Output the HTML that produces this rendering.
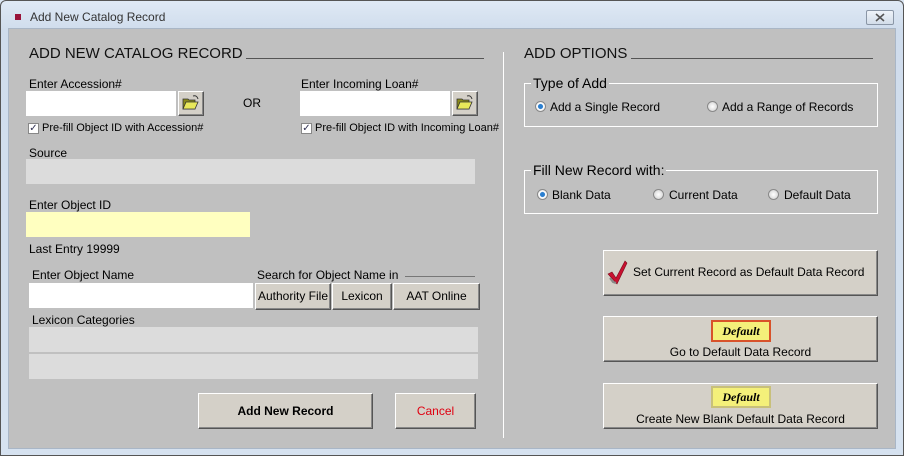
<!DOCTYPE html>
<html><head><meta charset="utf-8"><style>
*{box-sizing:border-box;margin:0;padding:0}
body{width:904px;height:456px;overflow:hidden;background:#dbe6f3;font-family:"Liberation Sans",Arial,sans-serif;font-size:12px;color:#000;position:relative}
.a{position:absolute}
.win{left:0;top:0;width:904px;height:456px;border:1px solid #555;border-radius:6px 6px 0 0;background:linear-gradient(#dfe9f5,#cfdcec 30px,#d6e2f0)}
.content{left:8px;top:28px;width:888px;height:421px;background:#c0c0c0;border:1px solid #a9b6c6}
.h{font-size:15px;color:#111}
.line{height:1px;background:#555}
.inp{background:#fff}
.dis{background:#dcdcdc}
.btn{background:#d4d0c8;border:1px solid;border-color:#fff #555 #555 #fff;box-shadow:inset -1px -1px 0 #888;text-align:center;font-size:12px}
.lbl{font-size:12px}
.grp{border:1px solid #fff}
.radio{width:11px;height:11px;border-radius:50%;border:1px solid #888;background:radial-gradient(#fff,#ccc)}
.radio.on{background:radial-gradient(#2b7fd0 35%,#fff 45%,#ddd)}
.cb{width:11px;height:11px;border:1px solid #888;background:#fff;font-size:10px;line-height:9px;text-align:center;color:#335}
.def{font-family:"Liberation Serif",serif;font-style:italic;font-weight:bold;font-size:12px;text-align:center;line-height:18px}
</style></head><body>
<div class="a win"></div>
<div class="a" style="left:15px;top:14px;width:6px;height:6px;background:#99143a"></div>
<div class="a" style="left:30px;top:10px;font-size:12px;color:#333">Add New Catalog Record</div>
<div class="a" style="left:866px;top:10px;width:28px;height:15px;border:1px solid #8a96a6;border-radius:2px;background:linear-gradient(#eef3f9,#d3dde9)">
<svg width="26" height="13"><path d="M9 3l8 7M17 3l-8 7" stroke="#555" stroke-width="1.6"/></svg></div>
<div class="a content"></div>

<div class="a h" style="left:29px;top:45px">ADD NEW CATALOG RECORD</div>
<div class="a line" style="left:246px;top:58px;width:238px"></div>
<div class="a" style="left:503px;top:52px;width:1px;height:386px;background:#fff"></div>

<div class="a lbl" style="left:29px;top:77px">Enter Accession#</div>
<div class="a inp" style="left:26px;top:91px;width:150px;height:25px"></div>
<div class="a btn" style="left:178px;top:91px;width:26px;height:25px"><svg width="22" height="22" viewBox="0 0 22 22"><path d="M3 7h5l1 1h6v9H3z" fill="#8a8a1a" stroke="#333" stroke-width=".8"/><path d="M3 17l3-7h12l-3 7z" fill="#e8e85a" stroke="#333" stroke-width=".8"/><path d="M13 4q4 -1 5 3" stroke="#333" fill="none"/></svg></div>
<div class="a lbl" style="left:243px;top:96px">OR</div>
<div class="a lbl" style="left:301px;top:77px">Enter Incoming Loan#</div>
<div class="a inp" style="left:300px;top:91px;width:150px;height:25px"></div>
<div class="a btn" style="left:452px;top:91px;width:26px;height:25px"><svg width="22" height="22" viewBox="0 0 22 22"><path d="M3 7h5l1 1h6v9H3z" fill="#8a8a1a" stroke="#333" stroke-width=".8"/><path d="M3 17l3-7h12l-3 7z" fill="#e8e85a" stroke="#333" stroke-width=".8"/><path d="M13 4q4 -1 5 3" stroke="#333" fill="none"/></svg></div>
<div class="a cb" style="left:28px;top:123px">✓</div>
<div class="a" style="left:42px;top:122px;font-size:11px">Pre-fill Object ID with Accession#</div>
<div class="a cb" style="left:301px;top:123px">✓</div>
<div class="a" style="left:315px;top:122px;font-size:11px">Pre-fill Object ID with Incoming Loan#</div>

<div class="a lbl" style="left:29px;top:146px">Source</div>
<div class="a dis" style="left:26px;top:159px;width:449px;height:25px"></div>
<div class="a lbl" style="left:29px;top:198px">Enter Object ID</div>
<div class="a" style="left:26px;top:212px;width:224px;height:25px;background:#ffffc0"></div>
<div class="a lbl" style="left:29px;top:242px">Last Entry 19999</div>

<div class="a lbl" style="left:32px;top:268px">Enter Object Name</div>
<div class="a inp" style="left:29px;top:283px;width:224px;height:25px"></div>
<div class="a lbl" style="left:257px;top:268px">Search for Object Name in</div>
<div class="a line" style="left:405px;top:276px;width:70px;background:#777"></div>
<div class="a btn" style="left:255px;top:283px;width:76px;height:27px;line-height:25px">Authority File</div>
<div class="a btn" style="left:332px;top:283px;width:60px;height:27px;line-height:25px">Lexicon</div>
<div class="a btn" style="left:393px;top:283px;width:87px;height:27px;line-height:25px">AAT Online</div>
<div class="a lbl" style="left:32px;top:313px">Lexicon Categories</div>
<div class="a dis" style="left:29px;top:327px;width:449px;height:25px"></div>
<div class="a dis" style="left:29px;top:354px;width:449px;height:25px"></div>

<div class="a btn" style="left:198px;top:393px;width:175px;height:36px;line-height:34px;font-weight:bold">Add New Record</div>
<div class="a btn" style="left:395px;top:393px;width:81px;height:36px;line-height:34px;color:#e00010">Cancel</div>

<div class="a h" style="left:524px;top:45px">ADD OPTIONS</div>
<div class="a line" style="left:631px;top:58px;width:242px"></div>
<div class="a grp" style="left:524px;top:83px;width:354px;height:44px"></div>
<div class="a" style="left:531px;top:75px;padding:0 2px;background:#c0c0c0;font-size:14px">Type of Add</div>
<div class="a radio on" style="left:535px;top:101px"></div>
<div class="a lbl" style="left:550px;top:100px">Add a Single Record</div>
<div class="a radio" style="left:707px;top:101px"></div>
<div class="a lbl" style="left:722px;top:100px">Add a Range of Records</div>

<div class="a grp" style="left:524px;top:170px;width:354px;height:44px"></div>
<div class="a" style="left:531px;top:162px;padding:0 2px;background:#c0c0c0;font-size:14px">Fill New Record with:</div>
<div class="a radio on" style="left:537px;top:189px"></div>
<div class="a lbl" style="left:552px;top:188px">Blank Data</div>
<div class="a radio" style="left:653px;top:189px"></div>
<div class="a lbl" style="left:669px;top:188px">Current Data</div>
<div class="a radio" style="left:768px;top:189px"></div>
<div class="a lbl" style="left:784px;top:188px">Default Data</div>

<div class="a btn" style="left:603px;top:250px;width:275px;height:46px"></div>
<svg class="a" style="left:606px;top:258px" width="22" height="28" viewBox="0 0 22 28"><path d="M2 16l4-2 4 6 9-17 2 2-10 21z" fill="#c81030" stroke="#7a0a1a" stroke-width=".6"/><path d="M4 20l3 4 3 1" stroke="#888" fill="none" stroke-width="2"/></svg>
<div class="a lbl" style="left:633px;top:265px">Set Current Record as Default Data Record</div>

<div class="a btn" style="left:603px;top:316px;width:275px;height:46px"></div>
<div class="a def" style="left:711px;top:320px;width:60px;height:22px;border:2px solid #d8522a;background:#f4f07a;line-height:18px">Default</div>
<div class="a lbl" style="left:603px;top:345px;width:275px;text-align:center">Go to Default Data Record</div>

<div class="a btn" style="left:603px;top:383px;width:275px;height:46px"></div>
<div class="a def" style="left:711px;top:386px;width:60px;height:22px;border:2px solid #c8c07a;background:#f4f07a;line-height:18px">Default</div>
<div class="a lbl" style="left:603px;top:412px;width:275px;text-align:center">Create New Blank Default Data Record</div>
</body></html>
